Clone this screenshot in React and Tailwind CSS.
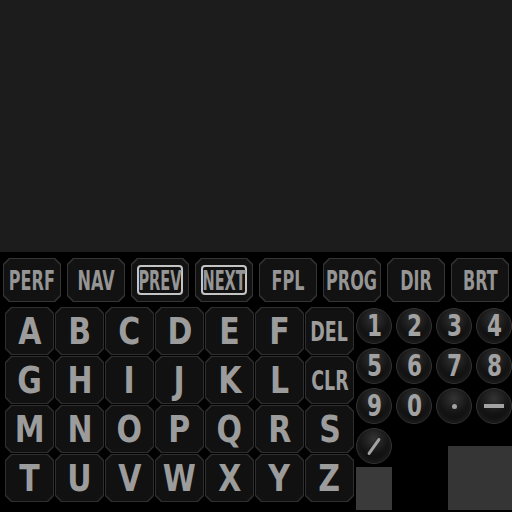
import React from "react";

const topKeys = ["PERF", "NAV", "PREV", "NEXT", "FPL", "PROG", "DIR", "BRT"];
const boxed = ["PREV", "NEXT"];

const letterRows = [
  ["A", "B", "C", "D", "E", "F", "DEL"],
  ["G", "H", "I", "J", "K", "L", "CLR"],
  ["M", "N", "O", "P", "Q", "R", "S"],
  ["T", "U", "V", "W", "X", "Y", "Z"],
];

const numKeys = ["1", "2", "3", "4", "5", "6", "7", "8", "9", "0", ".", "−"];

const chamfer =
  "[clip-path:polygon(6px_0,calc(100%_-_6px)_0,100%_6px,100%_calc(100%_-_6px),calc(100%_-_6px)_100%,6px_100%,0_calc(100%_-_6px),0_6px)]";

function TopKey({ label }) {
  return (
    <div className={`h-[44px] w-[58px] bg-[#343434] p-px ${chamfer}`}>
      <div
        className={`flex h-full w-full items-center justify-center bg-[#121212] ${chamfer}`}
      >
        {boxed.includes(label) ? (
          <div className="flex h-[30px] w-[46px] items-center justify-center rounded-[4px] border-2 border-[#c4c4c4]">
            <span className="scale-x-[0.6] text-[27px] font-bold leading-none text-[#959595]">
              {label}
            </span>
          </div>
        ) : (
          <span className="scale-x-[0.66] text-[27px] font-bold leading-none text-[#959595]">
            {label}
          </span>
        )}
      </div>
    </div>
  );
}

function LetterKey({ label }) {
  const small = label.length > 1;
  return (
    <div className={`h-[48px] w-[49px] bg-[#2e2e2e] p-px ${chamfer}`}>
      <div
        className={`flex h-full w-full items-center justify-center bg-[#111111] ${chamfer}`}
      >
        <span
          className={
            small
              ? "scale-x-[0.72] text-[27px] font-bold leading-none text-[#9c9c9c]"
              : "scale-x-90 text-[37px] font-bold leading-none text-[#9c9c9c]"
          }
        >
          {label}
        </span>
      </div>
    </div>
  );
}

function NumKey({ label }) {
  return (
    <div className="flex h-[36px] w-[36px] items-center justify-center rounded-full border border-[#333333] bg-[radial-gradient(circle_at_50%_28%,#333333_0%,#141414_50%,#050505_100%)] shadow-[inset_0_-3px_4px_rgba(255,255,255,0.07)]">
      {label === "." ? (
        <div className="h-[5px] w-[5px] rounded-full bg-[#a2a2a2]" />
      ) : label === "−" ? (
        <div className="h-[4px] w-[20px] bg-[#a2a2a2]" />
      ) : label === "/" ? (
        <div className="h-[3px] w-[20px] -rotate-[55deg] rounded-full bg-[#a2a2a2]" />
      ) : (
        <span className="scale-x-[0.8] text-[30px] font-bold leading-none text-[#a2a2a2]">
          {label}
        </span>
      )}
    </div>
  );
}

export default function App() {
  return (
    <div
      className="flex h-[512px] w-[512px] flex-col overflow-hidden bg-black"
      style={{ fontFamily: '"DejaVu Sans Condensed", "DejaVu Sans", sans-serif' }}
    >
      <div className="h-[252px] bg-[#1c1c1c]" />
      <div className="flex gap-[6px] pl-[3px] pt-[6px]">
        {topKeys.map((k) => (
          <TopKey key={k} label={k} />
        ))}
      </div>
      <div className="flex gap-[2px] pl-[5px] pt-[5px]">
        <div className="flex flex-col gap-px">
          {letterRows.map((row, i) => (
            <div key={i} className="flex gap-px">
              {row.map((k) => (
                <LetterKey key={k} label={k} />
              ))}
            </div>
          ))}
        </div>
        <div className="flex flex-1 flex-col pt-px">
          <div className="grid grid-cols-[36px_36px_36px_36px] gap-[4px]">
            {numKeys.map((k) => (
              <NumKey key={k} label={k} />
            ))}
          </div>
          <div className="flex flex-1 pt-[4px]">
            <div className="flex flex-col gap-[3px]">
              <NumKey label="/" />
              <div className="h-[43px] w-[36px] bg-[#3a3a3a]" />
            </div>
            <div className="flex flex-1 items-end justify-end">
              <div className="h-[64px] w-[64px] bg-[#353535]" />
            </div>
          </div>
        </div>
      </div>
    </div>
  );
}
